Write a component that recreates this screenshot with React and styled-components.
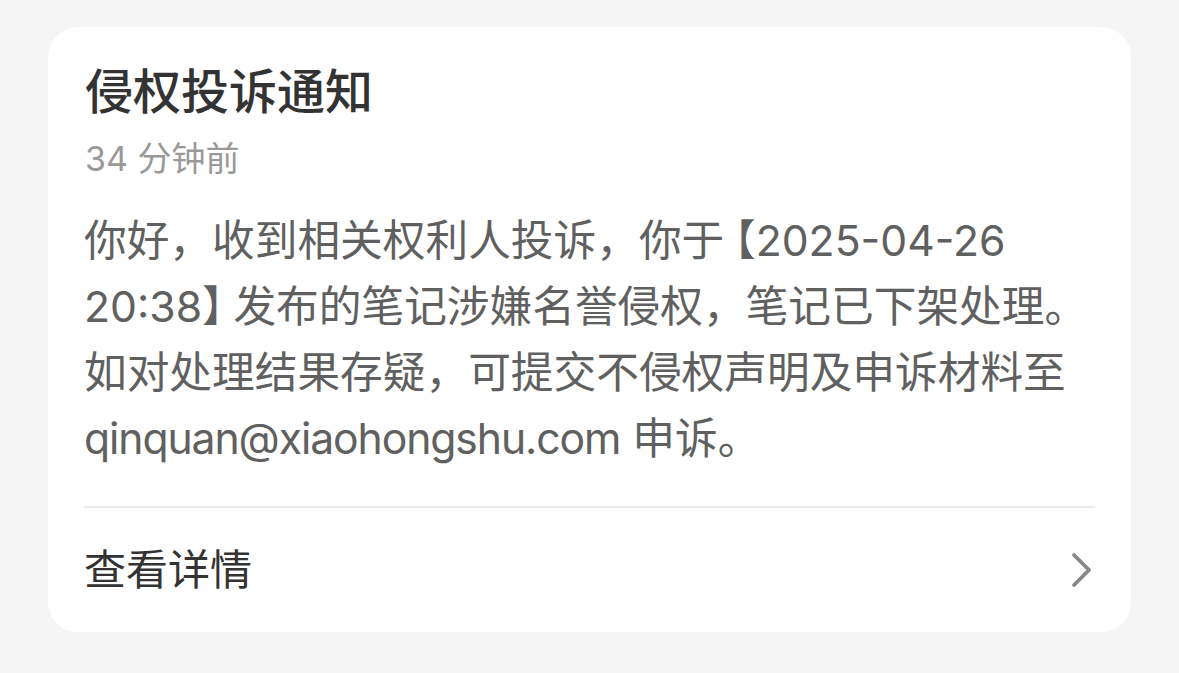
import React from "react";
import styled, { createGlobalStyle } from "styled-components";

const Global = createGlobalStyle`
  html, body {
    margin: 0;
    padding: 0;
    background: #f5f5f5;
  }
  body {
    font-family: "Inter", "Noto Sans CJK SC", "Noto Sans", sans-serif;
    -webkit-font-smoothing: antialiased;
  }
`;

const Page = styled.div`
  width: 1179px;
  height: 673px;
  box-sizing: border-box;
  padding: 27px 48px 0 48px;
  background: #f5f5f5;
`;

const Card = styled.div`
  background: #ffffff;
  border-radius: 30px;
  padding: 37px 36px 0 36px;
  height: 605px;
  box-sizing: border-box;
  display: flex;
  flex-direction: column;
`;

const Title = styled.h1`
  margin: 0;
  font-size: 48px;
  line-height: 56px;
  font-weight: 500;
  color: #333333;
  padding-left: 1px;
`;

const Time = styled.div`
  margin-top: 19px;
  font-size: 34px;
  line-height: 40px;
  color: #999999;
  padding-left: 1px;
`;

const Body = styled.p`
  margin: 29px 0 0 0;
  font-size: 42.7px;
  line-height: 66px;
  color: #606060;
  white-space: nowrap;
`;

const Bracket = styled.span`
  font-feature-settings: "halt" 1;
  padding-left: ${(p) => (p.$open ? "10px" : "0")};
  padding-right: ${(p) => (p.$open ? "0" : "10px")};
`;

const Email = styled.span`
  letter-spacing: -1.1px;
`;

const Divider = styled.div`
  margin-top: 34px;
  height: 2px;
  background: #ececec;
`;

const DetailRow = styled.div`
  flex: 1;
  display: flex;
  align-items: center;
  justify-content: space-between;
`;

const DetailText = styled.span`
  font-size: 42px;
  line-height: 56px;
  color: #333333;
`;

const Chevron = styled.svg`
  width: 22px;
  height: 36px;
  margin-right: 2px;
`;

export default function App() {
  return (
    <>
      <Global />
      <Page>
        <Card>
          <Title>侵权投诉通知</Title>
          <Time>34 分钟前</Time>
          <Body>
            你好，收到相关权利人投诉，你于<Bracket $open>【</Bracket>2025-04-26
            <br />
            20:38<Bracket>】</Bracket>发布的笔记涉嫌名誉侵权，笔记已下架处理。
            <br />
            如对处理结果存疑，可提交不侵权声明及申诉材料至
            <br />
            <Email>qinquan@xiaohongshu.com</Email> 申诉。
          </Body>
          <Divider />
          <DetailRow>
            <DetailText>查看详情</DetailText>
            <Chevron viewBox="0 0 22 36" fill="none">
              <path
                d="M3 3 L18 18 L3 33"
                stroke="#888888"
                strokeWidth="3.8"
                strokeLinecap="round"
                strokeLinejoin="round"
              />
            </Chevron>
          </DetailRow>
        </Card>
      </Page>
    </>
  );
}
